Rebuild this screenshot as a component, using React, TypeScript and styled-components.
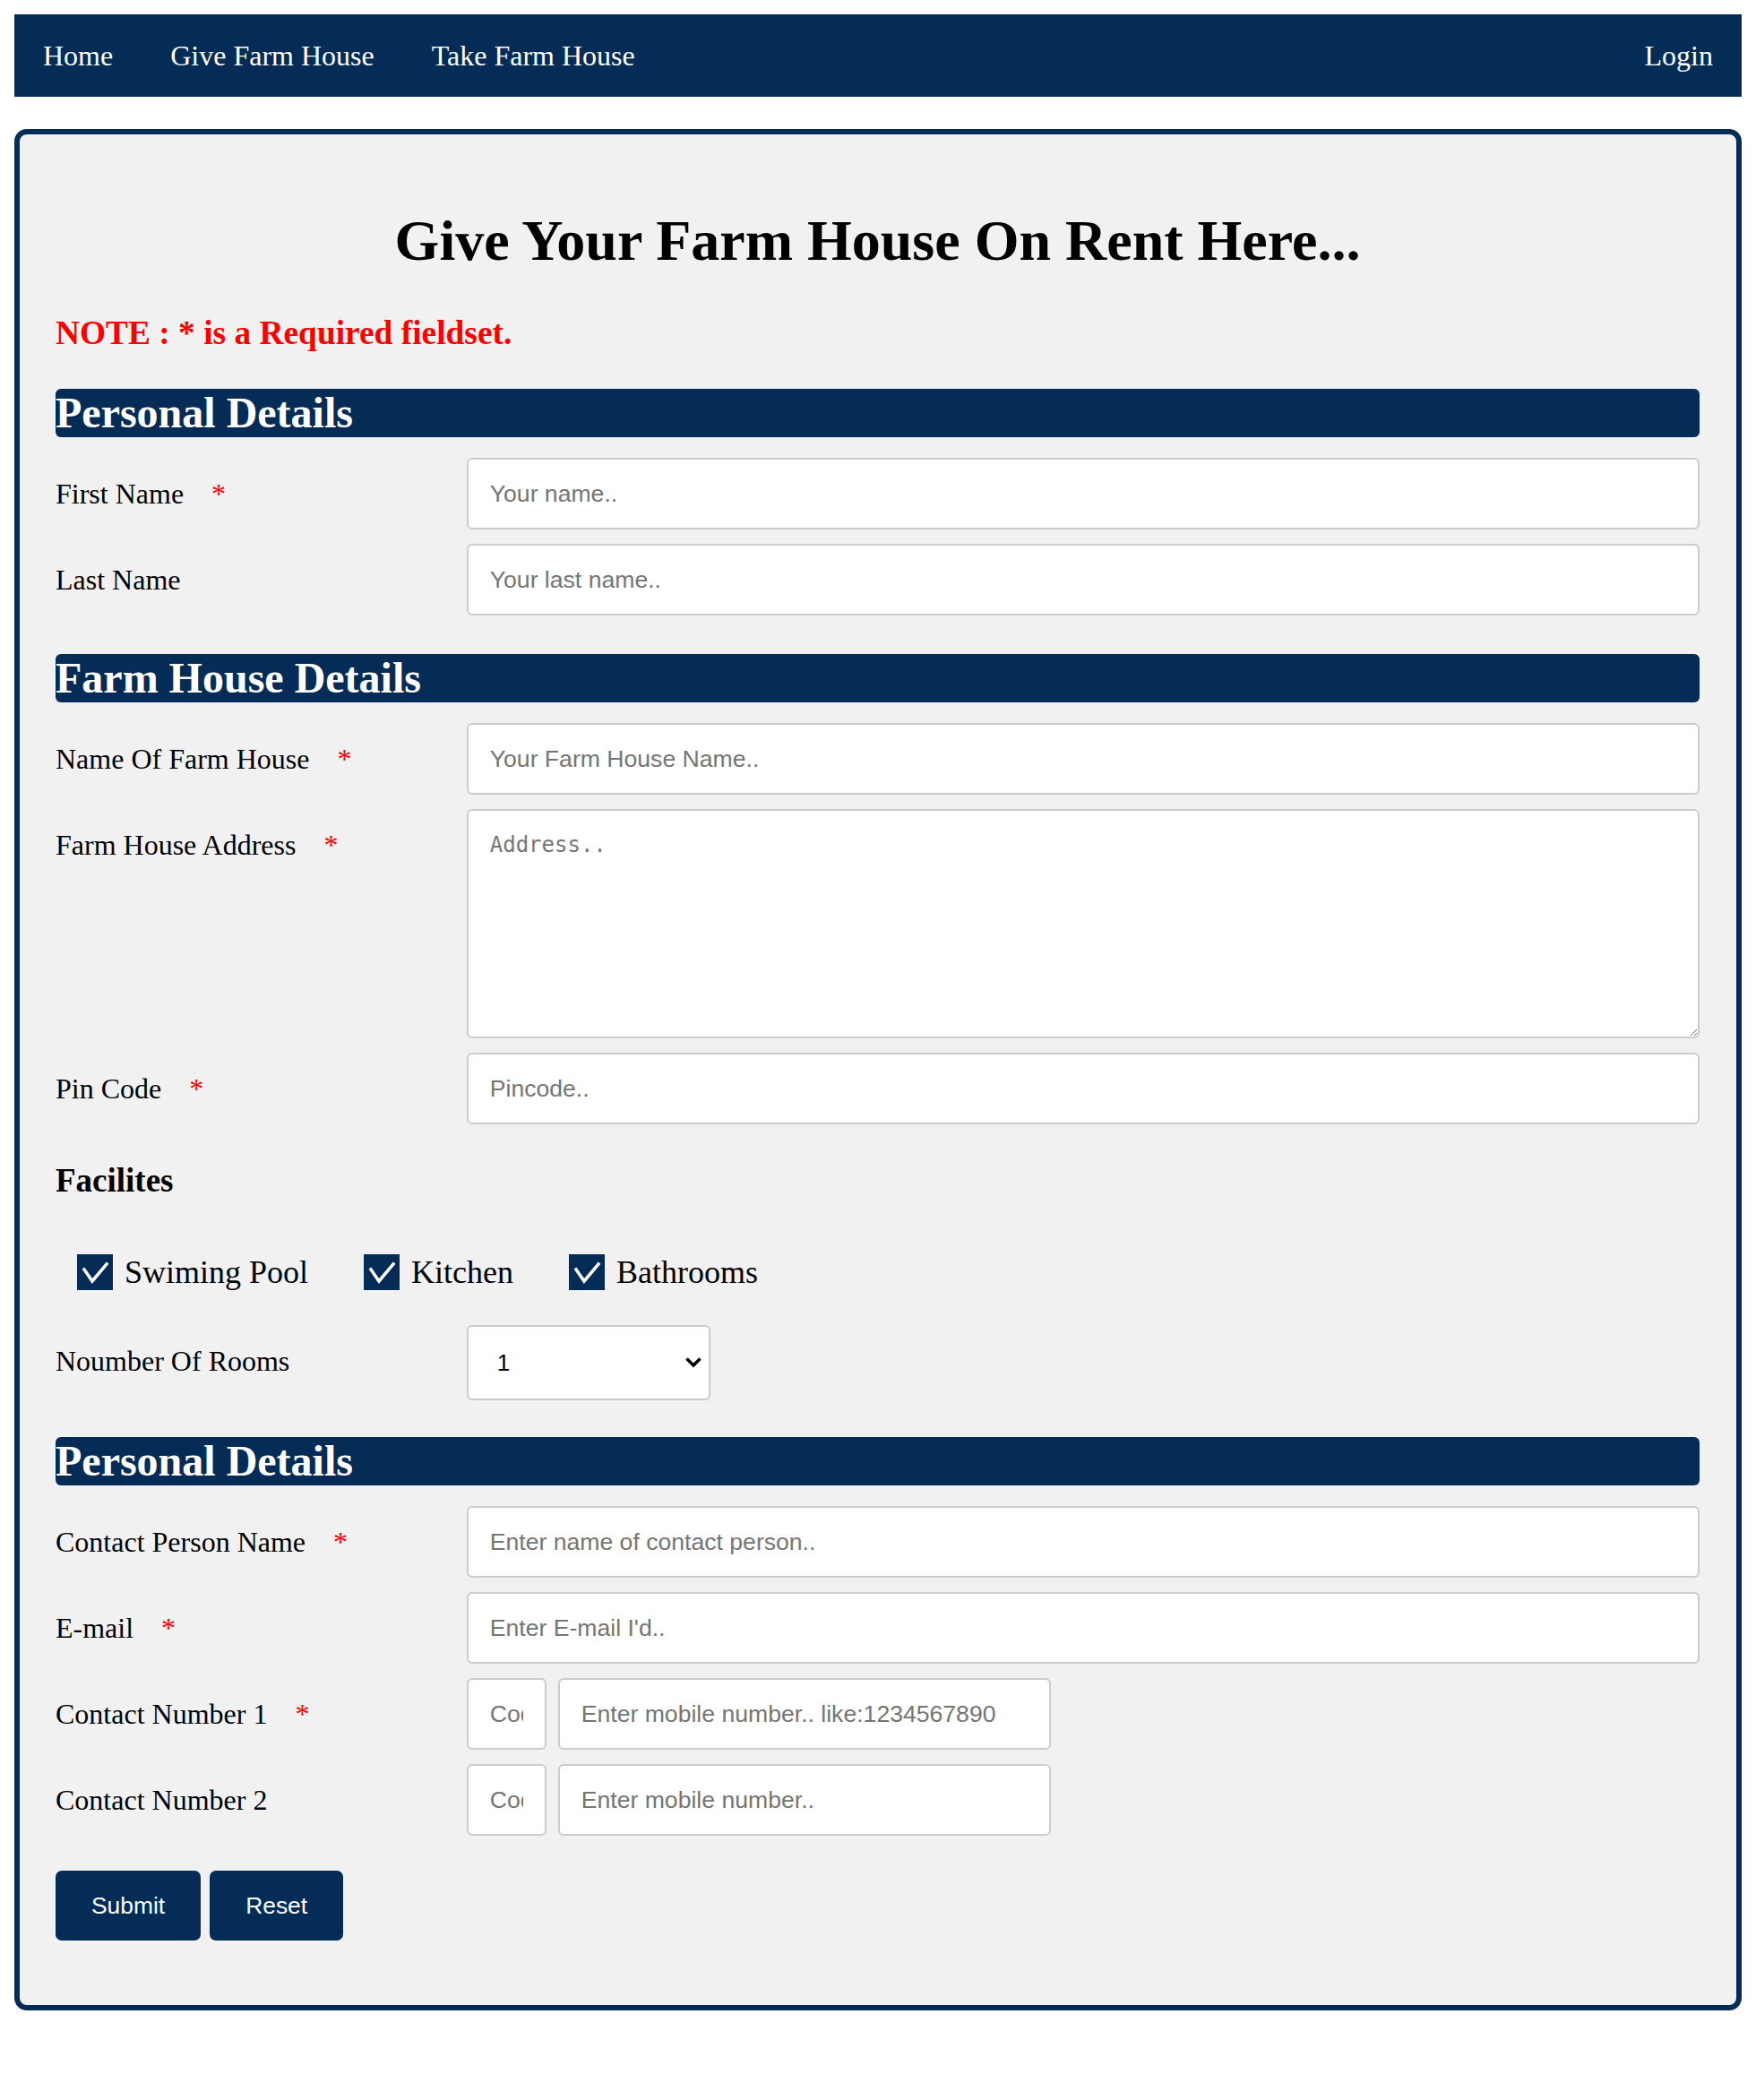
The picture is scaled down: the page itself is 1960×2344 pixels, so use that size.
import React from 'react'
import styled, { createGlobalStyle } from 'styled-components'

const NAVY = '#042c57'
const SERIF = `"Liberation Serif", "Times New Roman", serif`
const SANS = `"Liberation Sans", Arial, sans-serif`

const GlobalStyle = createGlobalStyle`
  body {
    margin: 16px;
    background: #fff;
    font-family: ${SERIF};
  }
  * {
    box-sizing: border-box;
  }
`

const NavBar = styled.nav`
  display: flex;
  align-items: center;
  height: 92px;
  background: ${NAVY};
`

const NavLink = styled.a<{ $right?: boolean }>`
  display: block;
  padding: 0 32px;
  margin-left: ${(p) => (p.$right ? 'auto' : '0')};
  color: #fff;
  font-family: ${SERIF};
  font-size: 32px;
  line-height: 40px;
  text-decoration: none;
  cursor: pointer;
`

const Card = styled.div`
  margin-top: 36px;
  background: #f1f1f1;
  border: 6px solid ${NAVY};
  border-radius: 14px;
  padding: 83px 41px 72px 40px;
`

const Title = styled.h1`
  margin: 0;
  text-align: center;
  font-family: ${SERIF};
  font-size: 64px;
  line-height: 72px;
  font-weight: bold;
  color: #000;
`

const Note = styled.p`
  margin: 46px 0 0;
  color: #ff0000;
  font-family: ${SERIF};
  font-size: 37.4px;
  line-height: 42px;
  font-weight: bold;
`

const SectionBar = styled.h2<{ $top: number }>`
  margin: ${(p) => p.$top}px 0 0;
  height: 54px;
  background: ${NAVY};
  border-radius: 6px;
  color: #fff;
  font-family: ${SERIF};
  font-size: 48px;
  line-height: 54px;
  font-weight: bold;
`

const Fields = styled.div<{ $top?: number }>`
  display: flex;
  flex-direction: column;
  gap: 16px;
  margin-top: ${(p) => p.$top ?? 23}px;
`

const Row = styled.div`
  display: flex;
  align-items: flex-start;
`

const Label = styled.label`
  flex: 0 0 25%;
  font-family: ${SERIF};
  font-size: 32px;
  line-height: 80px;
  color: #000;
`

const Star = styled.span`
  margin-left: 31px;
  color: #ff0000;
`

const Control = styled.div`
  flex: 1;
  display: flex;
  gap: 13px;
`

const TextInput = styled.input<{ $width?: number }>`
  display: block;
  width: ${(p) => (p.$width ? `${p.$width}px` : '100%')};
  flex: ${(p) => (p.$width ? '0 0 auto' : '1')};
  height: 80px;
  padding: 0 24px;
  border: 2px solid #ccc;
  border-radius: 6px;
  background: #fff;
  font-family: ${SANS};
  font-size: 26.6px;
  color: #000;
  outline: none;

  &::placeholder {
    color: #757575;
  }
`

const TextArea = styled.textarea`
  display: block;
  width: 100%;
  height: 256px;
  padding: 24px;
  border: 2px solid #ccc;
  border-radius: 6px;
  background: #fff;
  font-family: "DejaVu Sans Mono", "Liberation Mono", monospace;
  font-size: 24px;
  line-height: 28px;
  outline: none;

  &::placeholder {
    color: #757575;
  }
`

const SubHeading = styled.h3`
  margin: 42px 0 0;
  font-family: ${SERIF};
  font-size: 37px;
  line-height: 42px;
  font-weight: bold;
  color: #000;
`

const CheckRow = styled.div`
  display: flex;
  align-items: center;
  gap: 62px;
  margin-top: 61px;
  padding-left: 24px;
`

const CheckItem = styled.label`
  display: flex;
  align-items: center;
  gap: 13px;
  font-family: ${SERIF};
  font-size: 36px;
  line-height: 40px;
  color: #000;
`

const CheckBox = styled.span`
  display: block;
  width: 40px;
  height: 40px;
  background: ${NAVY};
`

const SelectWrap = styled.div`
  position: relative;
  width: 272px;
  height: 84px;
`

const Select = styled.select`
  appearance: none;
  width: 100%;
  height: 100%;
  padding: 0 32px;
  border: 2px solid #ccc;
  border-radius: 6px;
  background: #fff;
  font-family: ${SANS};
  font-size: 26px;
  color: #000;
  outline: none;
`

const Chevron = styled.svg`
  position: absolute;
  right: 9px;
  top: 35px;
  pointer-events: none;
`

const ButtonRow = styled.div`
  display: flex;
  gap: 10px;
  margin-top: 39px;
`

const Button = styled.button`
  height: 78px;
  padding: 0 40px;
  border: none;
  border-radius: 7px;
  background: ${NAVY};
  color: #fff;
  font-family: ${SANS};
  font-size: 26.4px;
  cursor: pointer;
`

function Check({ label }: { label: string }) {
  return (
    <CheckItem>
      <CheckBox>
        <svg width="40" height="40" viewBox="0 0 40 40">
          <path d="M8 17 L17 30 L33 11" fill="none" stroke="#fff" strokeWidth="3.5" strokeLinecap="square" />
        </svg>
      </CheckBox>
      {label}
    </CheckItem>
  )
}

function Field({ label, required, children }: { label: string; required?: boolean; children: React.ReactNode }) {
  return (
    <Row>
      <Label>
        {label}
        {required && <Star>*</Star>}
      </Label>
      <Control>{children}</Control>
    </Row>
  )
}

export default function App() {
  return (
    <>
      <GlobalStyle />
      <NavBar>
        <NavLink>Home</NavLink>
        <NavLink>Give Farm House</NavLink>
        <NavLink>Take Farm House</NavLink>
        <NavLink $right>Login</NavLink>
      </NavBar>
      <Card>
        <Title>Give Your Farm House On Rent Here...</Title>
        <Note>NOTE : * is a Required fieldset.</Note>

        <SectionBar $top={41}>Personal Details</SectionBar>
        <Fields>
          <Field label="First Name" required>
            <TextInput placeholder="Your name.." />
          </Field>
          <Field label="Last Name">
            <TextInput placeholder="Your last name.." />
          </Field>
        </Fields>

        <SectionBar $top={43}>Farm House Details</SectionBar>
        <Fields>
          <Field label="Name Of Farm House" required>
            <TextInput placeholder="Your Farm House Name.." />
          </Field>
          <Field label="Farm House Address" required>
            <TextArea placeholder="Address.." />
          </Field>
          <Field label="Pin Code" required>
            <TextInput placeholder="Pincode.." />
          </Field>
        </Fields>

        <SubHeading>Facilites</SubHeading>
        <CheckRow>
          <Check label="Swiming Pool" />
          <Check label="Kitchen" />
          <Check label="Bathrooms" />
        </CheckRow>
        <Fields $top={39}>
          <Field label="Noumber Of Rooms">
            <SelectWrap>
              <Select defaultValue="1">
                <option>1</option>
                <option>2</option>
                <option>3</option>
                <option>4</option>
                <option>5</option>
              </Select>
              <Chevron width="20" height="13" viewBox="0 0 20 13">
                <path d="M2.5 2.5 L10 10 L17.5 2.5" fill="none" stroke="#000" strokeWidth="3.5" />
              </Chevron>
            </SelectWrap>
          </Field>
        </Fields>

        <SectionBar $top={41}>Personal Details</SectionBar>
        <Fields>
          <Field label="Contact Person Name" required>
            <TextInput placeholder="Enter name of contact person.." />
          </Field>
          <Field label="E-mail" required>
            <TextInput placeholder="Enter E-mail I'd.." />
          </Field>
          <Field label="Contact Number 1" required>
            <TextInput $width={89} placeholder="Code" />
            <TextInput $width={550} placeholder="Enter mobile number.. like:1234567890" />
          </Field>
          <Field label="Contact Number 2">
            <TextInput $width={89} placeholder="Code" />
            <TextInput $width={550} placeholder="Enter mobile number.." />
          </Field>
        </Fields>

        <ButtonRow>
          <Button>Submit</Button>
          <Button>Reset</Button>
        </ButtonRow>
      </Card>
    </>
  )
}
